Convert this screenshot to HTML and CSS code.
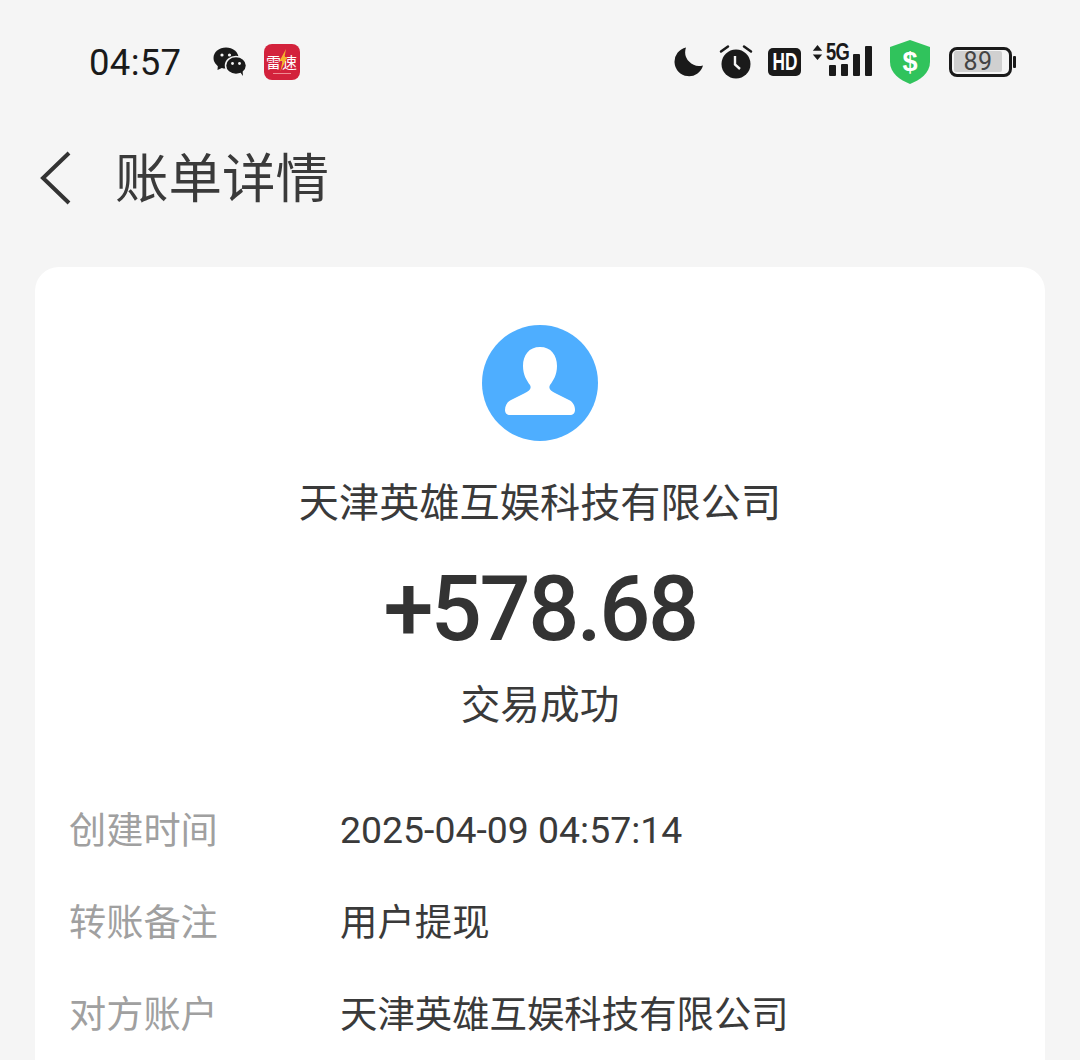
FILE: index.html
```html
<!DOCTYPE html>
<html lang="zh-CN">
<head>
<meta charset="UTF-8">
<title>账单详情</title>
<link rel="stylesheet" href="styles.css">
</head>
<body>
<div class="status">
  <div class="status-left">
    <span class="clock">04:57</span>
    <svg class="ic-wechat" width="34" height="30" viewBox="0 0 34 30">
      <ellipse cx="13" cy="11" rx="12.5" ry="10.5" fill="#1a1a1a"/>
      <path d="M5 17 L4.500 23 L11 20Z" fill="#1a1a1a"/>
      <ellipse cx="23" cy="18.500" rx="10.500" ry="9" fill="#1a1a1a" stroke="#f5f5f5" stroke-width="1.500"/>
      <path d="M27 25 L30 29 L29.500 23Z" fill="#1a1a1a"/>
      <circle cx="9" cy="8" r="1.600" fill="#f5f5f5"/>
      <circle cx="16.500" cy="8" r="1.600" fill="#f5f5f5"/>
      <circle cx="19.500" cy="16.500" r="1.400" fill="#f5f5f5"/>
      <circle cx="26.500" cy="16.500" r="1.400" fill="#f5f5f5"/>
    </svg>
    <span class="leisu">
      <span class="leisu-text">雷速</span>
      <svg class="leisu-bolt" width="9" height="22" viewBox="0 0 9 22"><path d="M7 0 L0.500 12 H3.500 L1.500 22 L8.500 8 H5.500Z" fill="#f5b32c"/></svg>
      <i class="leisu-line"></i>
    </span>
  </div>
  <div class="status-right">
    <svg class="ic-moon" width="32" height="30" viewBox="0 0 32 30"><path d="M14 0.500 A14.500 14.500 0 1 0 31 18.500 A14 14 0 0 1 14 0.500Z" fill="#1a1a1a"/></svg>
    <svg class="ic-alarm" width="34" height="36" viewBox="0 0 34 36">
      <circle cx="17" cy="20" r="14.500" fill="#1a1a1a"/>
      <path d="M2 7.500 L9 2.500 M25 2.500 L32 7.500" stroke="#1a1a1a" stroke-width="2.500" stroke-linecap="round"/>
      <path d="M16 12 V20.500 L21 25" fill="none" stroke="#f5f5f5" stroke-width="2.400"/>
    </svg>
    <span class="hd"><span class="hd-text">HD</span></span>
    <span class="signal">
      <svg class="arrows" width="11" height="15" viewBox="0 0 11 16"><path d="M5.500 0 L10.500 6 H0.500Z M5.500 16 L10.500 10 H0.500Z" fill="#1a1a1a"/></svg>
      <span class="fiveg">5G</span>
      <span class="bars">
        <i class="bar b1"></i><i class="bar b2"></i><i class="bar b3"></i><i class="bar b4"></i>
      </span>
    </span>
    <svg class="ic-shield" width="42" height="44" viewBox="0 0 42 44">
      <path d="M21 0 L41 7 V22 C41 33 31 40 21 44 C11 40 1 33 1 22 V7Z" fill="#30c35c"/>
      <text x="21" y="31" text-anchor="middle" class="shield-s">$</text>
    </svg>
    <span class="battery">
      <span class="battery-body"><span class="battery-fill">89</span></span>
      <i class="battery-cap"></i>
    </span>
  </div>
</div>

<div class="header">
  <svg class="back" width="34" height="54" viewBox="0 0 34 54"><path d="M30 2 L4 27 L30 52" fill="none" stroke="#333" stroke-width="4"/></svg>
  <h1>账单详情</h1>
</div>

<div class="card">
  <div class="summary">
    <svg class="avatar" width="116" height="116" viewBox="0 0 116 116">
      <circle cx="58" cy="58" r="58" fill="#4eaeff"/>
      <path d="M58 22 C69 22 75 30 75 41 C75 50 71 56 68 60 C66 64 69 66 73 68 L87 75 C91 77 93 81 93 85 C93 88 91 90 88 90 H28 C25 90 23 88 23 85 C23 81 25 77 29 75 L43 68 C47 66 50 64 48 60 C45 56 41 50 41 41 C41 30 47 22 58 22Z" fill="#fff"/>
    </svg>
    <div class="name">天津英雄互娱科技有限公司</div>
    <div class="amount">+578.68</div>
    <div class="state">交易成功</div>
  </div>
  <dl class="rows">
    <div class="row"><dt>创建时间</dt><dd class="num">2025-04-09 04:57:14</dd></div>
    <div class="row"><dt>转账备注</dt><dd>用户提现</dd></div>
    <div class="row"><dt>对方账户</dt><dd>天津英雄互娱科技有限公司</dd></div>
  </dl>
</div>
</body>
</html>
```
FILE: styles.css
```css
html, body {margin:0; padding:0;}
body {display:flex; flex-direction:column; width:1080px; height:1060px; overflow:hidden; background:#f5f5f5; color:#333; font-family:"Noto Sans CJK SC", "Noto Sans", sans-serif;}

.status {display:flex; justify-content:space-between; align-items:center; height:62px; padding:31px 64px 0 89px;}
.status-left {display:flex; align-items:center;}
.status-right {display:flex; align-items:center;}
.clock {font:400 36.500px Roboto, sans-serif; color:#1a1a1a; width:124px; letter-spacing:.3px;}
.leisu {position:relative; display:block; width:36px; height:36px; margin-left:17px; border-radius:8px; background:#d3223c; overflow:hidden;}
.leisu-text {display:block; font-size:15px; line-height:15px; padding-top:10px; color:#fff; text-align:center; white-space:nowrap; letter-spacing:1px;}
.leisu-bolt {position:absolute; left:15px; top:5px;}
.leisu-line {position:absolute; left:9px; right:9px; bottom:6px; height:1px; background:#ef8a92;}
.ic-alarm {margin-left:15px;}
.hd {display:block; margin-left:15px; width:33px; height:28px; border-radius:5px; background:#1a1a1a; color:#fff; text-align:center; overflow:hidden;}
.hd-text {display:block; font:700 24px/28px "Liberation Sans", sans-serif; transform:scaleX(.72);}
.signal {display:flex; align-items:flex-start; position:relative; margin-left:11px; width:61px; height:32px; top:-2px;}
.arrows {margin-top:1px;}
.fiveg {position:absolute; left:14px; top:-4px; font:700 23px/24px "Liberation Sans", sans-serif; color:#1a1a1a; letter-spacing:-1px; transform:scaleX(.8); transform-origin:left;}
.bars {position:absolute; left:17px; bottom:0; display:flex; align-items:flex-end; gap:5px;}
.bar {display:block; width:7px; background:#1a1a1a; border-radius:1px;}
.b1 {height:11px;}
.b2 {height:12px;}
.b3 {height:22px;}
.b4 {height:30px;}
.ic-shield {margin-left:16px;}
.shield-s {font:700 27px "Liberation Sans", sans-serif; fill:#fff;}
.battery {display:flex; align-items:center; margin-left:18px;}
.battery-body {display:block; box-sizing:border-box; width:63px; height:30px; border:3px solid #1a1a1a; border-radius:8px; padding:1px 2px;}
.battery-fill {display:block; width:48px; height:21px; background:#d0d0d0; border-radius:2px; font:400 25px/21px Roboto, sans-serif; color:#444; text-align:center; letter-spacing:.5px;}
.battery-cap {display:block; width:3px; height:12px; margin-left:1px; background:#1a1a1a; border-radius:1px;}

.header {display:flex; align-items:center; flex:none; height:106px; padding-left:39px; margin-top:29px;}
.back {flex:none; margin-top:6px;}
h1 {margin:0 0 0 42px; font-size:53.500px; line-height:60px; font-weight:400; color:#3a3a3a;}

.card {flex:1; margin:39px 35px 0; background:#fff; border-radius:24px 24px 0 0;}
.summary {display:flex; flex-direction:column; align-items:center; padding-top:58px;}
.avatar {display:block;}
.name {margin-top:31px; font-size:40.200px; line-height:56px; color:#3a3a3a;}
.amount {margin-top:32px; font:500 90px/100px Roboto, sans-serif; letter-spacing:-2.500px; color:#333;}
.state {margin-top:14px; font-size:39.700px; line-height:56px; color:#3a3a3a;}
.rows {margin:71px 0 0; padding:0 34px;}
.row {display:flex; margin-bottom:38px; align-items:flex-start;}
.row:last-child {margin-bottom:0;}
dt {width:271px; flex:none; font-size:37.200px; line-height:54px; color:#a0a0a0;}
dd {margin:0; font-size:37.400px; line-height:54px; color:#3a3a3a;}
dd.num {font-family:Roboto, sans-serif; height:54px; line-height:58px;}
```
